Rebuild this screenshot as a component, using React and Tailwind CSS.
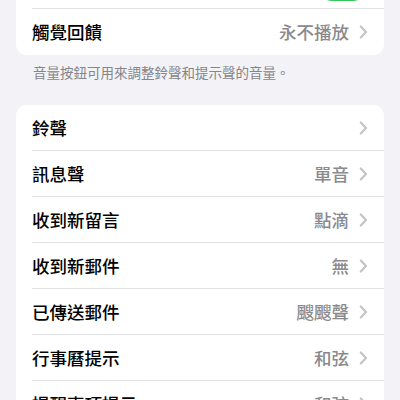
import React from "react";

const font = { fontFamily: '"Noto Sans CJK TC", "Noto Sans", sans-serif' };

function Chevron() {
  return (
    <svg width="9" height="14" viewBox="0 0 9 14" className="ml-[10px] shrink-0">
      <path d="M1.8 1.5 L7 7 L1.8 12.5" fill="none" stroke="#c4c4c7" strokeWidth="2.2" strokeLinecap="round" strokeLinejoin="round" />
    </svg>
  );
}

function Row({ label, value, last, toggle, h = "h-[45px]" }) {
  return (
    <div>
      <div className={`flex items-center ${h} pl-4 pr-4`}>
        <span className="text-[17.5px] font-medium text-black flex-1 leading-none">{label}</span>
        {toggle ? (
          <div className="w-[51px] h-[31px] rounded-full bg-[#34c759]" />
        ) : (
          <>
            {value && <span className="text-[17.5px] font-medium text-[#8a8a8e] leading-none">{value}</span>}
            <Chevron />
          </>
        )}
      </div>
      {!last && <div className="ml-4 h-px bg-[#e2e2e6]" />}
    </div>
  );
}

export default function App() {
  const rows = [
    ["鈴聲", ""],
    ["訊息聲", "單音"],
    ["收到新留言", "點滴"],
    ["收到新郵件", "無"],
    ["已傳送郵件", "颼颼聲"],
    ["行事曆提示", "和弦"],
    ["提醒事項提示", "和弦"],
  ];
  return (
    <div className="w-[400px] h-[400px] overflow-hidden bg-[#f2f2f7]" style={font}>
      <div className="mt-[-37px] mx-4 rounded-[10px] bg-white">
        <Row label="" toggle />
        <Row label="觸覺回饋" value="永不播放" last h="h-[46px]" />
      </div>
      <div className="px-4 pl-[33px] pt-[9px] text-[13.5px] leading-[16px] text-[#85858a]">
        音量按鈕可用來調整鈴聲和提示聲的音量。
      </div>
      <div className="mt-[25px] mx-4 rounded-[10px] bg-white">
        {rows.map(([l, v], i) => (
          <Row key={l} label={l} value={v} last={i === rows.length - 1} />
        ))}
      </div>
    </div>
  );
}
